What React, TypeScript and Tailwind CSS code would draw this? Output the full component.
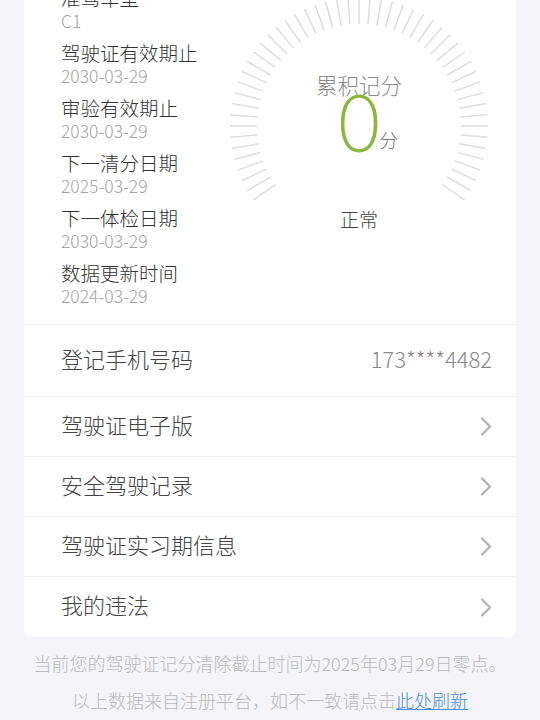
import type { ReactNode } from "react";

const infoItems = [
  { label: "准驾车型", value: "C1" },
  { label: "驾驶证有效期止", value: "2030-03-29" },
  { label: "审验有效期止", value: "2030-03-29" },
  { label: "下一清分日期", value: "2025-03-29" },
  { label: "下一体检日期", value: "2030-03-29" },
  { label: "数据更新时间", value: "2024-03-29" },
];

const linkRows = ["驾驶证电子版", "安全驾驶记录", "驾驶证实习期信息", "我的违法"];

function Ticks() {
  // 51 ticks from -35deg to 215deg, every 5deg
  const ticks = [];
  for (let i = 0; i <= 50; i++) {
    const a = ((-35 + i * 5) * Math.PI) / 180;
    const c = Math.cos(a);
    const s = Math.sin(a);
    ticks.push(
      <line
        key={i}
        x1={130 + 102 * c}
        y1={130 - 102 * s}
        x2={130 + 129 * c}
        y2={130 - 129 * s}
        stroke="#dddddd"
        strokeWidth="1.5"
      />
    );
  }
  return (
    <svg className="absolute inset-0" width="260" height="260" viewBox="0 0 260 260">
      {ticks}
    </svg>
  );
}

function Gauge() {
  return (
    <div className="relative mt-[10px] h-[260px] w-[260px] shrink-0">
      <Ticks />
      <div className="relative flex flex-col items-center pt-[79px]">
        <div className="text-[21.5px] font-light leading-[20px] text-[#8a8a8a]">累积记分</div>
        <div className="relative h-[56px]">
          <span className="inline-block scale-x-90 font-['Lato',sans-serif] text-[80px] font-light leading-[53px] text-[#8db63e]">
            0
          </span>
          <span className="absolute bottom-0 left-full -ml-[3px] text-[19px] font-light leading-[22px] text-[#777777]">
            分
          </span>
        </div>
        <div className="mt-[56px] text-[19px] font-light leading-[24px] text-[#444444]">正常</div>
      </div>
    </div>
  );
}

function Chevron() {
  return (
    <svg width="12" height="19" viewBox="0 0 12 19" fill="none">
      <polyline
        points="2,1.5 10,9.5 2,17.5"
        stroke="#b3b3b3"
        strokeWidth="2.4"
        strokeLinecap="round"
        strokeLinejoin="round"
      />
    </svg>
  );
}

function Row({ label, right, border = true, tall = false }: { label: string; right: ReactNode; border?: boolean; tall?: boolean }) {
  return (
    <div
      className={`flex items-center justify-between pl-[37px] pr-6 ${tall ? "h-[72px]" : "h-[60px]"} ${
        border ? "border-b border-[#f0f0f0]" : ""
      }`}
    >
      <span className="pb-[6px] text-[22px] font-light leading-[28px] text-[#444444]">{label}</span>
      {right}
    </div>
  );
}

export default function App() {
  return (
    <div className="min-h-screen overflow-hidden bg-[#f4f4f9] px-6 font-['Noto_Sans_CJK_SC','Noto_Sans',sans-serif]">
      <div className="-mt-[30px] rounded-b-lg bg-white">
        <div className="flex border-b border-[#f0f0f0] pb-[17px] pl-[37px] pt-4">
          <div className="flex w-[168px] shrink-0 flex-col gap-[9px]">
            {infoItems.map((item) => (
              <div key={item.label}>
                <div className="text-[19.5px] font-light leading-[24px] text-[#333333]">{item.label}</div>
                <div className="text-[17.5px] font-light leading-[22px] text-[#a3a3a3]">{item.value}</div>
              </div>
            ))}
          </div>
          <Gauge />
        </div>

        <Row
          tall
          label="登记手机号码"
          right={
            <span className="pb-[6px] text-[22px] font-light leading-[28px] text-[#888888]">173****4482</span>
          }
        />
        {linkRows.map((label, i) => (
          <Row key={label} label={label} right={<Chevron />} border={i < linkRows.length - 1} />
        ))}
      </div>

      <div className="mt-2 text-center text-[18px] font-light leading-[37px] text-[#bbbbbb]">
        <p>当前您的驾驶证记分清除截止时间为2025年03月29日零点。</p>
        <p>
          以上数据来自注册平台，如不一致请点击
          <span className="text-[#4d8fdc] underline">此处刷新</span>
        </p>
      </div>
    </div>
  );
}
